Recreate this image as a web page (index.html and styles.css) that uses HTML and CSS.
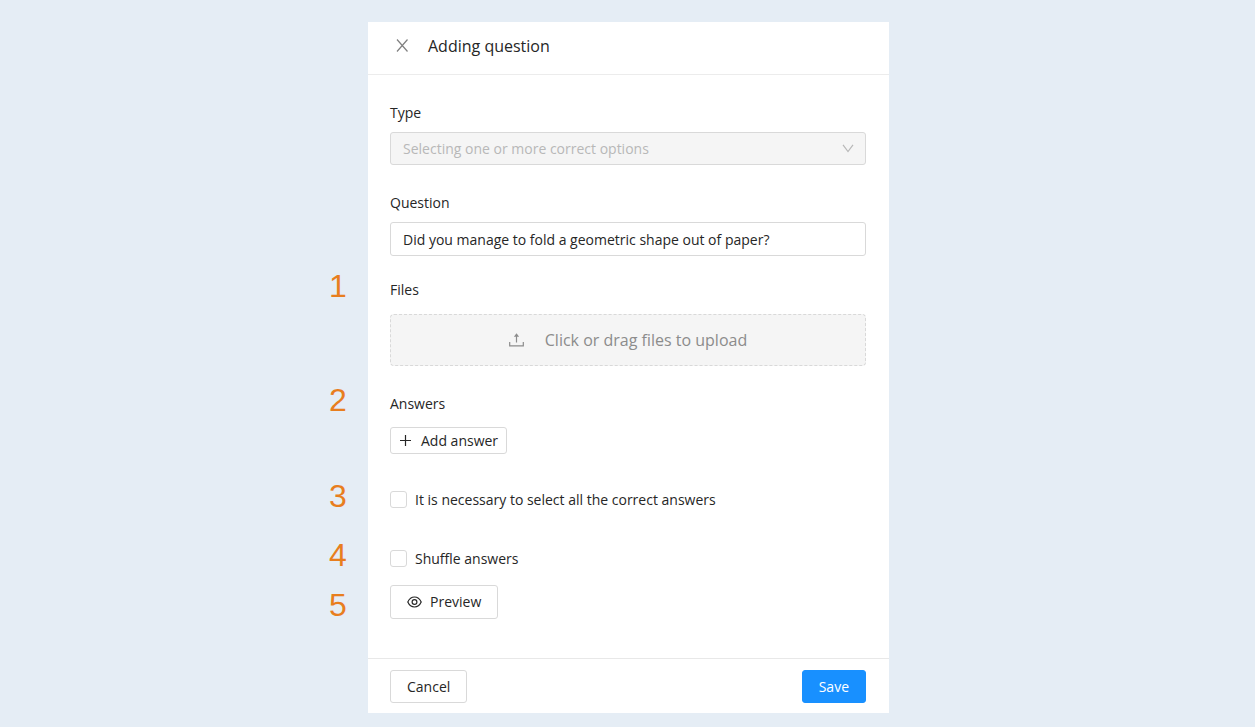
FILE: index.html
```html
<!DOCTYPE html>
<html lang="en">
<head>
  <meta charset="UTF-8" />
  <meta name="viewport" content="width=device-width, initial-scale=1.0"/>
  <title>Adding question</title>

  <link rel="stylesheet" href="styles.css">
</head>
<body>
  <form class="drawer">
    <header class="drawer-header">
      <button type="button" class="close" aria-label="Close">
        <svg width="14" height="14" viewBox="0 0 14 14"><path d="M1 .500l10.500 12M11.500.500L1 12.500"/></svg>
      </button>
      <h1>Adding question</h1>
    </header>

    <div class="drawer-body">
      <div class="field">
        <label for="type">Type</label>
        <div class="select-wrap">
          <select id="type" disabled>
            <option>Selecting one or more correct options</option>
          </select>
          <svg class="arrow" width="12" height="9" viewBox="0 0 12 9"><path d="M1 .800l5 6.700L11 .800"/></svg>
        </div>
      </div>

      <div class="field">
        <label for="question">Question</label>
        <input type="text" id="question" value="Did you manage to fold a geometric shape out of paper?">
      </div>

      <div class="field files">
        <span class="marker">1</span>
        <span class="label">Files</span>
        <button type="button" class="upload">
          <svg width="15" height="14" viewBox="0 0 15 14"><path d="M.700 9v3.800h13.600V9M7.500 9.500V2"/><path class="solid" d="M7.500.300L4.900 3.800h5.200z"/></svg>
          Click or drag files to upload
        </button>
      </div>

      <div class="field answers">
        <span class="marker">2</span>
        <span class="label">Answers</span>
        <button type="button" class="btn btn-small">
          <svg width="13" height="13" viewBox="0 0 13 13"><path d="M6.500 1v11M1 6.500h11"/></svg>
          Add answer
        </button>
      </div>

      <div class="check">
        <span class="marker">3</span>
        <input type="checkbox" id="selectAll">
        <label for="selectAll">It is necessary to select all the correct answers</label>
      </div>

      <div class="check">
        <span class="marker">4</span>
        <input type="checkbox" id="shuffle">
        <label for="shuffle">Shuffle answers</label>
      </div>

      <div class="preview">
        <span class="marker">5</span>
        <button type="button" class="btn">
          <svg width="15" height="12" viewBox="0 0 15 12"><path d="M.800 6C2.300 2.700 4.600 1 7.500 1s5.200 1.700 6.700 5c-1.500 3.300-3.800 5-6.700 5S2.300 9.300.800 6z"/><circle cx="7.500" cy="6" r="2.400"/></svg>
          Preview
        </button>
      </div>
    </div>

    <footer class="drawer-footer">
      <button type="button" class="btn">Cancel</button>
      <button type="submit" class="btn btn-primary">Save</button>
    </footer>
  </form>
</body>
</html>
```
FILE: styles.css
```css
* {
  box-sizing: border-box;
}
body {
  margin: 0;
  padding: 22px 14px 14px 16px;
  background: #e5edf5;
  color: #262626;
  font-family: "Open Sans", "Noto Sans", sans-serif;
  font-size: 14px;
  line-height: 20px;
}
button, input, select {
  font: inherit;
  color: inherit;
}
button {
  cursor: pointer;
}
svg {
  flex: none;
  fill: none;
  stroke: currentColor;
  stroke-width: 1.2;
}
.solid {
  fill: currentColor;
  stroke: none;
}
.drawer {
  max-width: 521px;
  margin: 0 auto;
  background: #fff;
}
.drawer-header {
  display: flex;
  align-items: center;
  gap: 18px;
  padding: 12px 22px 16px 28px;
  border-bottom: 1px solid #ececec;
}
.drawer-header h1 {
  margin: 0;
  font-size: 16px;
  font-weight: 400;
  line-height: 24px;
}
.close {
  display: flex;
  padding: 0;
  border: none;
  background: none;
  color: #808080;
}
.drawer-body {
  padding: 28px 23px 39px 22px;
}
.field {
  position: relative;
  display: flex;
  flex-direction: column;
  align-items: flex-start;
  gap: 9px;
  margin-bottom: 28px;
}
.field.files {
  margin-top: -4px;
  gap: 14px;
}
.field.answers {
  gap: 13px;
  margin-bottom: 36px;
}
.select-wrap {
  position: relative;
  width: 100%;
}
select, input[type="text"] {
  display: block;
  width: 100%;
  height: 34px;
  padding: 0 12px;
  border: 1px solid #d9d9d9;
  border-radius: 3px;
  background: #fff;
}
select {
  appearance: none;
  height: 33px;
  background: #f5f5f5;
  color: #b8b8b8;
  opacity: 1;
}
.arrow {
  position: absolute;
  top: 12px;
  right: 12px;
  color: #b8b8b8;
}
.upload {
  display: flex;
  align-items: center;
  justify-content: center;
  gap: 21px;
  width: 100%;
  height: 52px;
  border: 1px dashed #d9d9d9;
  border-radius: 4px;
  background: #f5f5f5;
  color: #8c8c8c;
  font-size: 16px;
}
.btn {
  display: inline-flex;
  align-items: center;
  gap: 8px;
  height: 34px;
  padding: 0 16px;
  border: 1px solid #d9d9d9;
  border-radius: 3px;
  background: #fff;
}
.btn-small {
  height: 27px;
  padding: 0 8px;
  gap: 9px;
}
.btn-primary {
  border-color: #1890ff;
  background: #1890ff;
  color: #fff;
}
.check {
  position: relative;
  display: flex;
  align-items: center;
  gap: 8px;
  margin-bottom: 39px;
}
.check input {
  appearance: none;
  width: 17px;
  height: 17px;
  margin: 0 0 1px;
  border: 1px solid #d9d9d9;
  border-radius: 3px;
  background: #fff;
}
.check input:checked {
  background: #1890ff;
}
.preview {
  position: relative;
  display: flex;
  margin-top: -23px;
}
/* step numbers hang in the margin left of the form */
.marker {
  position: absolute;
  top: -10px;
  left: -61px;
  color: #e87e1e;
  font-family: "Liberation Sans", Arial, sans-serif;
  font-size: 32px;
  line-height: 32px;
}
.preview .marker {
  top: 4px;
}
.drawer-footer {
  display: flex;
  justify-content: space-between;
  padding: 11px 23px 10px 22px;
  border-top: 1px solid #e8e8e8;
}
.drawer-footer .btn {
  height: 33px;
}
```
